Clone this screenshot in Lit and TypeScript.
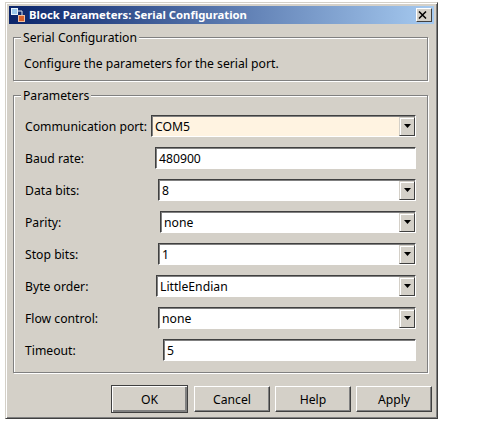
import { LitElement, html, css } from 'lit';
import { customElement } from 'lit/decorators.js';

interface Row {
    label: string;
    value: string;
    left: number;
    combo: boolean;
    hilite?: boolean;
}

// left = field's x offset inside the row, the dialog aligns each one by its own label
const ROWS: Row[] = [
    { label: 'Communication port:', value: 'COM5', left: 126, combo: true, hilite: true },
    { label: 'Baud rate:', value: '480900', left: 130, combo: false },
    { label: 'Data bits:', value: '8', left: 133, combo: true },
    { label: 'Parity:', value: 'none', left: 135, combo: true },
    { label: 'Stop bits:', value: '1', left: 133, combo: true },
    { label: 'Byte order:', value: 'LittleEndian', left: 131, combo: true },
    { label: 'Flow control:', value: 'none', left: 133, combo: true },
    { label: 'Timeout:', value: '5', left: 138, combo: false },
];

@customElement('app-root')
export class AppRoot extends LitElement {
    static styles = css`
        :host {
            display: block;
            height: 446px;
            background: #fff;
            font-family: 'Noto Sans', sans-serif;
            font-size: 12.2px;
            color: #000;
            overflow: hidden;
        }
        .window {
            box-sizing: border-box;
            width: 433px;
            height: 417px;
            margin: 2px 0 0 5px;
            padding: 3px;
            background: #d4d0c8;
            border: 1px solid;
            border-color: #d4d0c8 #404040 #404040 #d4d0c8;
            box-shadow: inset 1px 1px 0 #fff, inset -1px -1px 0 #808080;
        }
        .titlebar {
            display: flex;
            align-items: center;
            height: 18px;
            padding: 0 2px 0 1px;
            background: linear-gradient(90deg, #0a246a, #a6caf0);
            color: #fff;
            font-weight: bold;
            font-size: 11.3px;
        }
        .titlebar svg {
            margin-right: 3px;
            flex: none;
        }
        .titlebar span {
            flex: 1;
            white-space: nowrap;
            padding-bottom: 2px;
        }
        .close {
            box-sizing: border-box;
            width: 16px;
            height: 14px;
            display: flex;
            align-items: center;
            justify-content: center;
            background: #d4d0c8;
            border: 1px solid;
            border-color: #fff #404040 #404040 #fff;
        }
        .group {
            position: relative;
            box-sizing: border-box;
            width: 415px;
            margin-left: 4px;
            border: 1px solid #808080;
            box-shadow: inset 1px 1px 0 #fff, 1px 1px 0 #fff;
        }
        .group.info {
            height: 44px;
            margin-top: 13px;
            padding: 17px 0 0 10px;
        }
        .group.params {
            height: 278px;
            margin-top: 14px;
            padding: 19px 11px 0 11px;
        }
        /* legend sits on top of the group's border */
        .legend {
            position: absolute;
            top: -8px;
            left: 7px;
            padding: 0 2px 0 2px;
            background: #d4d0c8;
            line-height: 15px;
        }
        .rows {
            display: flex;
            flex-direction: column;
            gap: 10px;
        }
        .row {
            display: flex;
            align-items: center;
            height: 22px;
        }
        .label {
            flex: none;
            white-space: nowrap;
        }
        .field {
            flex: 1;
            display: flex;
            align-items: center;
            min-width: 0;
            box-sizing: border-box;
            height: 22px;
            padding-left: 3px;
            background: #fff;
            border: 1px solid;
            border-color: #404040 #fff #fff #404040;
            box-shadow: inset 1px 1px 0 #808080;
        }
        .field.hilite {
            background: #fff3e1;
        }
        .field .text {
            flex: 1;
        }
        .arrow {
            box-sizing: border-box;
            width: 16px;
            height: 19px;
            display: flex;
            align-items: center;
            justify-content: center;
            background: #d4d0c8;
            border: 1px solid;
            border-color: #d4d0c8 #404040 #404040 #d4d0c8;
            box-shadow: inset 1px 1px 0 #fff;
        }
        .buttons {
            display: flex;
            justify-content: flex-end;
            gap: 5px;
            margin-top: 13px;
            padding-right: 2px;
        }
        .btn {
            box-sizing: border-box;
            width: 76px;
            height: 26px;
            display: flex;
            align-items: center;
            justify-content: center;
            background: #d4d0c8;
            border: 1px solid;
            border-color: #fff #404040 #404040 #fff;
            box-shadow: inset -1px -1px 0 #808080;
        }
        .btn.default {
            width: 77px;
            height: 28px;
            margin-top: -1px;
            margin-right: 1px;
            outline: 1px solid #404040;
            outline-offset: -1px;
            box-shadow: inset 1px 1px 0 #fff, inset -2px -2px 0 #808080;
        }
    `;

    renderRow(row: Row) {
        return html`
            <div class="row">
                <div class="label" style="width:${row.left}px">${row.label}</div>
                <div class="field ${row.hilite ? 'hilite' : ''}">
                    <span class="text">${row.value}</span>
                    ${row.combo
                        ? html`<div class="arrow">
                              <svg width="7" height="4" viewBox="0 0 7 4"><path d="M0 0h7L3.5 4z" fill="#000" /></svg>
                          </div>`
                        : ''}
                </div>
            </div>
        `;
    }

    render() {
        return html`
            <div class="window">
                <div class="titlebar">
                    <svg width="16" height="16" viewBox="0 0 16 16">
                        <rect x="1.5" y="1.5" width="6" height="6" fill="#9cc8ec" stroke="#e8f2fa" />
                        <path d="M7 4h5v5" fill="none" stroke="#dfe6ee" />
                        <rect x="8.5" y="8.5" width="6" height="6" fill="#d9622b" stroke="#f0c0a0" />
                    </svg>
                    <span>Block Parameters: Serial Configuration</span>
                    <div class="close">
                        <svg width="9" height="8" viewBox="0 0 9 8">
                            <path d="M1 0.5l7 7M8 0.5l-7 7" stroke="#000" stroke-width="1.5" fill="none" />
                        </svg>
                    </div>
                </div>
                <div class="group info">
                    <div class="legend">Serial Configuration</div>
                    Configure the parameters for the serial port.
                </div>
                <div class="group params">
                    <div class="legend">Parameters</div>
                    <div class="rows">${ROWS.map((r) => this.renderRow(r))}</div>
                </div>
                <div class="buttons">
                    <div class="btn default">OK</div>
                    <div class="btn">Cancel</div>
                    <div class="btn">Help</div>
                    <div class="btn">Apply</div>
                </div>
            </div>
        `;
    }
}
